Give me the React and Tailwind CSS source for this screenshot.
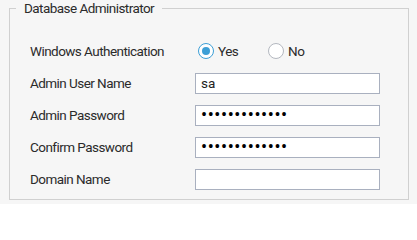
import React from "react";

function Radio({ checked, label, className = "" }) {
  return (
    <label className={"flex items-center " + className}>
      {checked ? (
        <span className="flex h-[16px] w-[16px] items-center justify-center rounded-full border border-[#3d9fd6] bg-white">
          <span className="h-[8px] w-[8px] rounded-full bg-[#3d9fd6]" />
        </span>
      ) : (
        <span className="h-[16px] w-[16px] rounded-full border border-[#b4b8c0] bg-white" />
      )}
      <span className="ml-[4px] text-[13.5px] tracking-[-0.5px] text-[#2b2b2b]">{label}</span>
    </label>
  );
}

function Row({ label, children }) {
  return (
    <div className="flex h-[32px] items-center">
      <div className="w-[185px] shrink-0 pl-[20px] text-[13.5px] tracking-[-0.55px] text-[#2b2b2b]">{label}</div>
      {children}
    </div>
  );
}

function Field({ value = "", password = false }) {
  return (
    <div className="flex h-[21px] w-[185px] items-center border border-[#a9b0bf] bg-white px-[5px]">
      {password ? (
        <span className="text-[18px] leading-none tracking-[0.6px] text-black">{"•".repeat(13)}</span>
      ) : (
        <span className="text-[13.5px] text-[#222]">{value}</span>
      )}
    </div>
  );
}

export default function App() {
  return (
    <div className="h-[204px] w-[417px] bg-[#f6f6f6] pl-[9px] pt-0 font-[Roboto,sans-serif]">
      <fieldset className="w-[400px] border border-[#d0d0d0] pb-[4px]">
        <legend className="ml-[6px] px-[8px] text-[13.5px] leading-[17px] tracking-[-0.55px] text-[#2b2b2b]">Database Administrator</legend>
        <div className="pt-[18px]">
          <Row label="Windows Authentication">
            <div className="flex items-center pl-[3px]">
              <Radio checked label="Yes" className="w-[70px]" />
              <Radio label="No" />
            </div>
          </Row>
          <Row label="Admin User Name">
            <Field value="sa" />
          </Row>
          <Row label="Admin Password">
            <Field password />
          </Row>
          <Row label="Confirm Password">
            <Field password />
          </Row>
          <Row label="Domain Name">
            <Field />
          </Row>
        </div>
      </fieldset>
    </div>
  );
}
